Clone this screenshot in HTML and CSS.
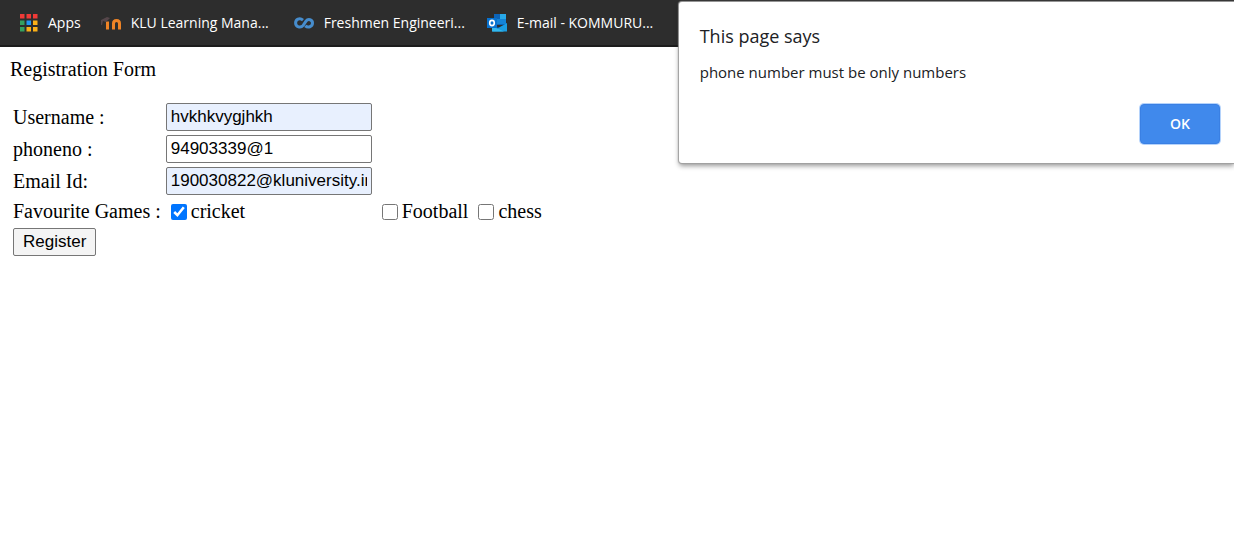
FILE: index.html
```html
<!DOCTYPE html>
<html lang="en">
<head>
<meta charset="utf-8">
<title>Registration Form</title>
<link rel="stylesheet" href="styles.css">
</head>
<body>
<nav class="bookmarks" aria-label="Bookmarks">
  <a class="bookmark" href="#">
    <svg class="icon" viewBox="0 0 18 18" aria-hidden="true">
      <path fill="#f03a37" d="M0 0h4.500v4.500H0zM6.500 0H11v4.500H6.500zM13 0h4.500v4.500H13z"/>
      <path fill="#34a160" d="M0 6.500h4.500V11H0zM0 13h4.500v4.500H0z"/>
      <path fill="#2196f3" d="M6.500 6.500H11V11H6.500z"/>
      <path fill="#fbb018" d="M13 6.500h4.500V11H13zM6.500 13H11v4.500H6.500zM13 13h4.500v4.500H13z"/>
    </svg>
    <span>Apps</span>
  </a>
  <a class="bookmark" href="#">
    <svg class="icon wide" viewBox="0 0 20 18" aria-hidden="true">
      <path fill="none" stroke="#ef8426" stroke-width="3" d="M6.500 15.500V7.500M12.500 15.500V9.500q0-3 3-3t3 3v6"/>
      <path fill="#55464a" d="m0 6 6-3 3 1-4 4-3-1-1 4H0z"/>
    </svg>
    <span class="label">KLU Learning Mana...</span>
  </a>
  <a class="bookmark" href="#">
    <svg class="icon wide" viewBox="0 0 20 18" aria-hidden="true">
      <path fill="none" stroke="#468ccc" stroke-width="3" d="M9 6.200C5.500 3.300 1.600 5.600 1.600 9c0 4 5 5.500 7.600 2.400L12 7.200c2.200-3.100 6.500-1.500 6.500 1.800 0 3.800-4.600 5.200-7.200 2.800"/>
    </svg>
    <span class="label">Freshmen Engineeri...</span>
  </a>
  <a class="bookmark" href="#">
    <svg class="icon wide" viewBox="0 0 20 18" aria-hidden="true">
      <path fill="#0c64b8" d="M7 0h12v11H7z"/>
      <path fill="#28a8e8" d="M13 0h6v5h-6z"/>
      <path fill="#1484d8" d="M7 5h6v5H7zM13 5h6v5h-6z"/>
      <path fill="#0c4c90" d="m5 10 8 4 7-5v8H5z"/>
      <path fill="#1b9de2" d="M5 17.500 20 9v8.500z"/>
      <path fill="#32b8ee" d="m5 12 12 5.500H5z"/>
      <path fill="#0872cf" d="M0 4h10v10H0z"/>
      <ellipse cx="5" cy="9" rx="2.300" ry="2.600" fill="none" stroke="#fff" stroke-width="1.600"/>
    </svg>
    <span class="label">E-mail - KOMMURU...</span>
  </a>
</nav>

<main class="page">
  <p class="title">Registration Form</p>
  <form>
    <table class="fields">
      <tr>
        <td><label for="username">Username :</label></td>
        <td><input class="text filled" id="username" type="text" value="hvkhkvygjhkh"></td>
      </tr>
      <tr>
        <td><label for="phone">phoneno :</label></td>
        <td><input class="text" id="phone" type="text" value="94903339@1"></td>
      </tr>
      <tr>
        <td><label for="email">Email Id:</label></td>
        <td><input class="text filled" id="email" type="text" value="190030822@kluniversity.in"></td>
      </tr>
      <tr>
        <td>Favourite Games :</td>
        <td><label class="game"><input class="check" type="checkbox" checked>cricket</label></td>
        <td><label class="game"><input class="check" type="checkbox">Football</label></td>
        <td><label class="game"><input class="check" type="checkbox">chess</label></td>
      </tr>
      <tr>
        <td><button class="register" type="button">Register</button></td>
      </tr>
    </table>
  </form>
</main>

<div class="dialog" role="alertdialog" aria-labelledby="dialog-title" aria-describedby="dialog-message">
  <h1 class="dialog-title" id="dialog-title">This page says</h1>
  <p class="dialog-message" id="dialog-message">phone number must be only numbers</p>
  <div class="dialog-actions"><button class="ok" type="button">OK</button></div>
</div>
</body>
</html>
```
FILE: styles.css
```css
* {
  box-sizing: border-box;
}

body {
  margin: 0;
  background: #fff;
  color: #000;
  font: 20px/24px "Liberation Serif", "Times New Roman", serif;
}

.bookmarks {
  display: flex;
  align-items: center;
  gap: 20px;
  padding: 11px 20px;
  background: #2d2d2d;
  border-bottom: 2px solid #1c1c1c;
  font: 14px/23px "Open Sans", "Noto Sans", sans-serif;
}

.bookmark {
  display: flex;
  align-items: center;
  gap: 10px;
  color: #fff;
  text-decoration: none;
  white-space: nowrap;
}

.label {
  min-width: 143px;
}

.icon {
  flex: none;
  width: 18px;
  height: 18px;
}

.icon.wide {
  width: 20px;
}

.page {
  padding: 10px;
}

.title {
  margin: 0 0 19px;
}

.fields {
  border-spacing: 2px;
}

.fields td {
  padding: 1px;
  line-height: 25px;
}

.text {
  display: block;
  width: 206px;
  height: 28px;
  margin-left: 1px;
  padding: 1px 4px;
  border: 1px solid #767676;
  border-radius: 2px;
  background: #fff;
  color: #000;
  font: 17px/24px "Liberation Sans", Arial, sans-serif;
}

.text.filled {
  background: #e8f0fe;
}

.game {
  display: flex;
  align-items: center;
  gap: 4px;
  padding-left: 6px;
}

.check {
  width: 16px;
  height: 16px;
  margin: 0;
  accent-color: #0075ff;
}

.register {
  display: block;
  height: 28px;
  padding: 0 9px;
  border: 1px solid #767676;
  border-radius: 2px;
  background: #f4f4f4;
  color: #000;
  font: 17px/24px "Liberation Sans", Arial, sans-serif;
}

.dialog {
  position: absolute;
  top: 2px;
  right: 0;
  width: 45%;
  padding: 22px 14px 19px 21px;
  border-radius: 3px 0 0 3px;
  background: #fff;
  box-shadow: 0 0 1px 1px #a0a0a0, 0 3px 5px rgba(0, 0, 0, 0.4);
  color: #202124;
  font: 15px/24px "Open Sans", "Noto Sans", sans-serif;
}

.dialog-title {
  margin: 0 0 12px;
  font-size: 18px;
  font-weight: 400;
}

.dialog-message {
  margin: 0 0 20px;
}

.dialog-actions {
  display: flex;
  justify-content: flex-end;
}

.ok {
  width: 80px;
  height: 40px;
  border: 1px solid #3a80e4;
  border-radius: 4px;
  background: #4089ec;
  box-shadow: 0 0 0 1px #b5d3fb;
  color: #fff;
  font: 600 14px/24px "Open Sans", "Noto Sans", sans-serif;
}
```
